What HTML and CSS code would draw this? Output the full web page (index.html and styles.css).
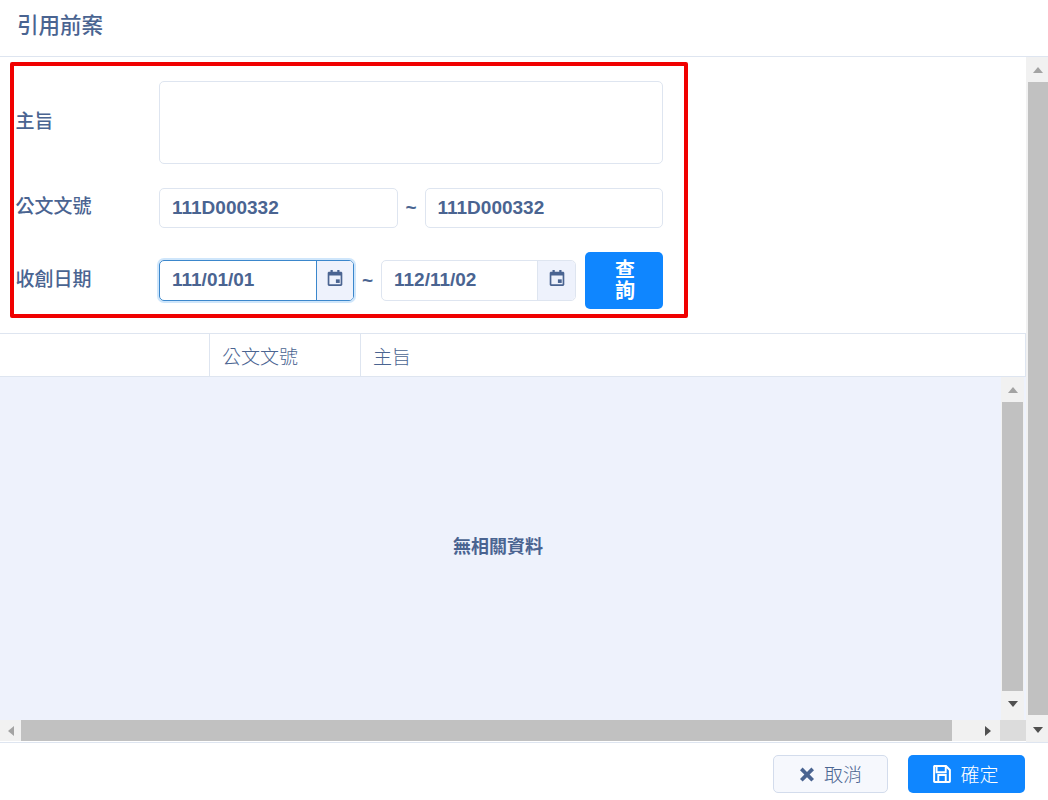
FILE: index.html
```html
<!DOCTYPE html>
<html lang="zh-Hant">
<head>
<meta charset="utf-8">
<title>引用前案</title>
<link rel="stylesheet" href="styles.css">
</head>
<body>
<div class="dialog">
  <header class="dialog-head"><h1 class="dialog-title">引用前案</h1></header>
  <div class="dialog-body">
    <div class="scroll-content">
      <form class="search-box">
        <div class="row row-subject">
          <label class="field-label">主旨</label>
          <div class="field-text"></div>
        </div>
        <div class="row row-number">
          <label class="field-label">公文文號</label>
          <div class="fields">
            <div class="field-input">111D000332</div>
            <span class="tilde">~</span>
            <div class="field-input">111D000332</div>
          </div>
        </div>
        <div class="row row-date">
          <label class="field-label">收創日期</label>
          <div class="fields">
            <div class="date-group focused">
              <div class="date-value">111/01/01</div>
              <div class="date-addon">
                <svg class="cal-icon" viewBox="0 0 16 16"><path fill-rule="evenodd" d="M4 0.8h2v1.6h4V0.8h2v1.6h1.2c.8 0 1.3.5 1.3 1.3v10c0 .8-.5 1.3-1.3 1.3H2.8c-.8 0-1.3-.5-1.3-1.300v-10c0-.8.5-1.300 1.300-1.300H4zM3 5.800v7.700h10V5.800z"/><rect x="8.800" y="9.200" width="3.400" height="3.200"/></svg>
              </div>
            </div>
            <span class="tilde">~</span>
            <div class="date-group">
              <div class="date-value">112/11/02</div>
              <div class="date-addon">
                <svg class="cal-icon" viewBox="0 0 16 16"><path fill-rule="evenodd" d="M4 0.8h2v1.6h4V0.8h2v1.6h1.2c.8 0 1.3.5 1.3 1.3v10c0 .8-.5 1.3-1.3 1.3H2.8c-.8 0-1.3-.5-1.3-1.300v-10c0-.8.5-1.300 1.300-1.300H4zM3 5.800v7.700h10V5.800z"/><rect x="8.800" y="9.200" width="3.400" height="3.200"/></svg>
              </div>
            </div>
            <button type="button" class="search-btn">查詢</button>
          </div>
        </div>
      </form>
      <div class="grid">
        <div class="grid-head">
          <div class="col col-check"></div>
          <div class="col col-num">公文文號</div>
          <div class="col col-subject">主旨</div>
        </div>
        <div class="grid-body">
          <div class="grid-empty">無相關資料</div>
          <div class="vbar inner-vbar">
            <div class="bar-btn"><span class="arrow arrow-up"></span></div>
            <div class="vthumb inner-thumb"></div>
            <div class="bar-btn"><span class="arrow arrow-down"></span></div>
          </div>
        </div>
        <div class="hbar">
          <div class="hbtn"><span class="arrow arrow-left"></span></div>
          <div class="hthumb"></div>
          <div class="htrack"></div>
          <div class="hbtn hbtn-right"><span class="arrow arrow-right"></span></div>
          <div class="corner"></div>
        </div>
      </div>
    </div>
    <div class="vbar outer-vbar">
      <div class="bar-btn"><span class="arrow arrow-up"></span></div>
      <div class="vthumb outer-thumb"></div>
      <div class="bar-btn"><span class="arrow arrow-down"></span></div>
    </div>
  </div>
  <footer class="dialog-foot">
    <button type="button" class="foot-btn btn-cancel">
      <svg class="btn-icon" viewBox="0 0 16 16"><path d="M3.600 1.600 8 6l4.400-4.400 2.600 2.600L10.600 8.600l4.400 4.400-2.600 2.600L8 11.200l-4.400 4.400L1 13l4.400-4.400L1 4.200z"/></svg>
      <span class="btn-text">取消</span>
    </button>
    <button type="button" class="foot-btn btn-ok">
      <svg class="btn-icon" viewBox="0 0 18 18"><path fill-rule="evenodd" d="M2.500 1h10.500l4 4v10.500c0 .9-.6 1.500-1.500 1.500h-13C1.600 17 1 16.400 1 15.500v-13C1 1.600 1.600 1 2.500 1zM5 2.800v3.700h6.500V2.800zM2.800 2.800v12.400h2v-6.200h8.400v6.200h2V5.800l-2-2v4.500H3.300V2.800zM6.500 10.700v4.500h5v-4.500z"/></svg>
      <span class="btn-text">確定</span>
    </button>
  </footer>
</div>
</body>
</html>
```
FILE: styles.css
```css
* { box-sizing: border-box; }
html, body { margin: 0; padding: 0; background: #fff; }
body {
  font-family: "Liberation Sans", "Noto Sans CJK TC", sans-serif;
  color: #4a6491;
  overflow: hidden;
}
.dialog { width: 1048px; height: 800px; display: flex; flex-direction: column; }
.dialog-head {
  height: 57px;
  flex: none;
  border-bottom: 1px solid #dee5f0;
  padding: 0 0 0 17px;
  display: flex;
  align-items: center;
}
.dialog-title { margin: 0 0 5px; font-size: 21.500px; font-weight: 500; line-height: 28px; }
.dialog-body { height: 686px; flex: none; display: flex; border-bottom: 1px solid #dee5f0; }
.scroll-content { flex: 1; min-width: 0; display: flex; flex-direction: column; }
.search-box {
  width: 678px;
  height: 256px;
  margin: 5px 0 15px 10px;
  border: 4px solid #f00000;
  border-radius: 2px;
  padding: 15px 21px 0 2px;
  flex: none;
}
.row { display: flex; }
.row-subject { height: 83px; align-items: center; margin-bottom: 24px; }
.row-number { height: 40px; align-items: center; margin-bottom: 24px; }
.row-date { height: 57px; align-items: center; }
.field-label { width: 143px; flex: none; font-size: 19px; font-weight: 500; line-height: 24px; position: relative; top: -1px; left: -0.500px; }
.field-text { flex: 1; height: 83px; border: 1px solid #dee5f0; border-radius: 5px; }
.fields { flex: 1; display: flex; align-items: center; height: 57px; }
.field-input {
  flex: 1;
  height: 40px;
  border: 1px solid #dee5f0;
  border-radius: 5px;
  padding: 0 12px;
  font-size: 19px;
  font-weight: 700;
  line-height: 38px;
}
.tilde { width: 27px; flex: none; text-align: center; font-size: 19px; font-weight: 700; line-height: 24px; }
.date-group {
  width: 195px;
  height: 41px;
  flex: none;
  display: flex;
  border: 1px solid #dee5f0;
  border-radius: 5px;
  overflow: hidden;
}
.date-group.focused { border-color: #3b87cc; box-shadow: 0 0 0 2px #cfe6fb; overflow: visible; }
.date-value { flex: 1; padding: 0 12px; font-size: 19px; font-weight: 700; line-height: 38px; }
.date-addon {
  width: 38px;
  flex: none;
  background: #eef2fc;
  border-left: 1px solid #dee5f0;
  display: flex;
  align-items: center;
  justify-content: center;
  border-radius: 0 4px 4px 0;
}
.focused .date-addon { border-left-color: #3b87cc; width: 37px; }
.cal-icon { width: 18px; height: 18px; fill: #4a6491; margin-top: -6px; }
.search-btn {
  width: 78px;
  height: 57px;
  margin-left: 9px;
  flex: none;
  border: 0;
  border-radius: 5px;
  background: #0f86ff;
  color: #fff;
  font: 700 20px/21px "Liberation Sans", "Noto Sans CJK TC", sans-serif;
  padding: 0 28px 0 30px;
}
.grid { width: 1026px; flex: 1; display: flex; flex-direction: column; min-height: 0; }
.grid-head {
  height: 44px;
  flex: none;
  display: flex;
  border-top: 1px solid #dee5f0;
  border-bottom: 1px solid #dee5f0;
  border-right: 1px solid #dee5f0;
  font-size: 19px;
  line-height: 48px;
  font-weight: 300;
}
.col { border-right: 1px solid #dee5f0; padding-left: 12px; }
.col-check { width: 210px; flex: none; }
.col-num { width: 151px; flex: none; }
.col-subject { flex: 1; border-right: 0; padding-left: 12px; }
.grid-body { height: 343px; flex: none; display: flex; background: #eef2fc; }
.grid-empty {
  flex: 1;
  display: flex;
  align-items: center;
  justify-content: center;
  font-size: 18px;
  font-weight: 700;
  padding: 0 5px 7px 0;
}
.vbar { display: flex; flex-direction: column; background: #f1f1f1; flex: none; }
.inner-vbar { width: 23px; margin-right: 2px; padding: 0 1px; }
.outer-vbar { width: 22px; padding-left: 2px; }
.bar-btn { height: 25px; flex: none; display: flex; align-items: center; justify-content: center; }
.vthumb { background: #c1c1c1; flex: none; }
.inner-thumb { height: 289px; }
.outer-thumb { height: 633px; margin-bottom: auto; }
.arrow { width: 0; height: 0; display: block; border-style: solid; border-color: transparent; }
.arrow-up { border-width: 0 5.500px 6px; border-bottom-color: #a3a3a3; }
.arrow-down { border-width: 6px 5.500px 0; border-top-color: #505050; }
.arrow-left { border-width: 5.500px 6px 5.500px 0; border-right-color: #a3a3a3; }
.arrow-right { border-width: 5.500px 0 5.500px 6px; border-left-color: #505050; }
.hbar { height: 21px; flex: none; display: flex; background: #f1f1f1; }
.hbtn { width: 21px; flex: none; display: flex; align-items: center; justify-content: center; }
.hthumb { width: 931px; flex: none; background: #c1c1c1; }
.htrack { flex: 1; }
.hbtn-right { width: 25px; }
.corner { width: 26px; flex: none; background: #dcdcdc; }
.dialog-foot {
  flex: 1;
  display: flex;
  justify-content: flex-end;
  gap: 20px;
  padding: 12px 23px 0 0;
}
.foot-btn {
  height: 38px;
  display: flex;
  align-items: center;
  justify-content: center;
  gap: 9px;
  border-radius: 5px;
  font: 300 19px/24px "Liberation Sans", "Noto Sans CJK TC", sans-serif;
  padding: 0;
}
.btn-text { margin-top: 4px; }
.btn-cancel { width: 115px; background: #f6f8fd; border: 1px solid #d3dcec; color: #4a6491; }
.btn-ok { width: 117px; background: #0f86ff; border: 0; color: #fff; padding-right: 2px; gap: 8px; }
.btn-icon { width: 16px; height: 16px; fill: currentColor; flex: none; }
.btn-ok .btn-icon { width: 20px; height: 20px; }
```
